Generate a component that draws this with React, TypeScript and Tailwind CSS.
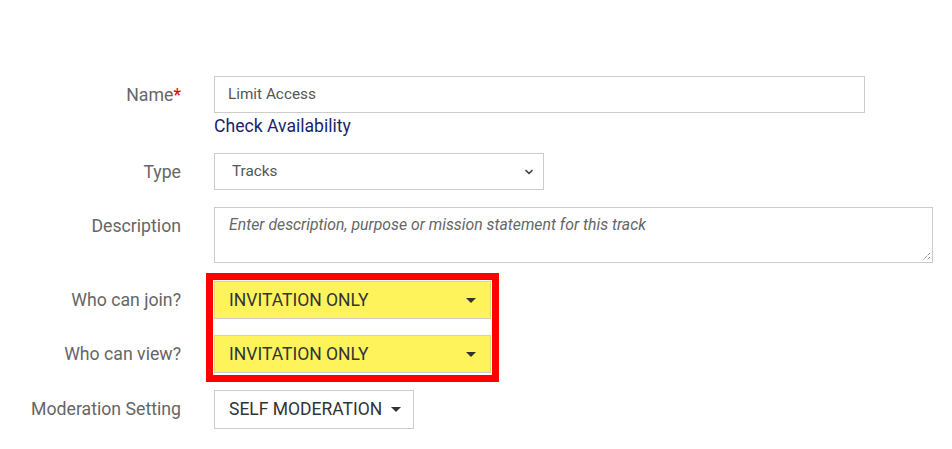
import { ChevronDown } from "lucide-react";

type RowProps = {
  label: React.ReactNode;
  children: React.ReactNode;
  className?: string;
};

const Row = ({ label, children, className = "" }: RowProps) => {
  return (
    <div className={`flex items-start ${className}`}>
      <label className="w-[181px] shrink-0 text-right text-[17.7px] leading-[38px] text-[#666]">
        {label}
      </label>
      <div className="ml-[33px]">{children}</div>
    </div>
  );
};

const Caret = () => (
  <span className="inline-block w-0 h-0 border-l-[5px] border-r-[5px] border-t-[5px] border-l-transparent border-r-transparent border-t-[#333]" />
);

const YellowSelect = ({ value }: { value: string }) => (
  <div className="flex items-center justify-between w-[277px] h-[38px] bg-[#fff35c] border border-[#e3da66] border-b-[#ccc] pl-[14px] pr-[14px] text-[17.5px] text-[#333]">
    <span>{value}</span>
    <Caret />
  </div>
);

export default function App() {
  return (
    <div className="w-[952px] h-[449px] bg-white pt-[76px] font-['Roboto',sans-serif] overflow-hidden">
      <Row label={<>Name<span className="text-[#e00]">*</span></>}>
        <div className="w-[651px] h-[37px] border border-[#ccc] flex items-center px-[13px] text-[15.3px] text-[#555]">
          Limit Access
        </div>
        <a className="block mt-[3px] text-[17.6px] leading-[20px] text-[#1a1f6e]">
          Check Availability
        </a>
      </Row>

      <Row label="Type" className="mt-[17px]">
        <div className="w-[330px] h-[37px] border border-[#ccc] flex items-center justify-between pl-[17px] pr-[8px] text-[15.3px] text-[#555]">
          <span>Tracks</span>
          <ChevronDown size={12} strokeWidth={3.5} className="text-[#444]" />
        </div>
      </Row>

      <Row label="Description" className="mt-[16px]">
        <div className="relative w-[719px] h-[56px] border border-[#ccc] px-[14px] pt-[5px] text-[15.8px] italic text-[#666]">
          Enter description, purpose or mission statement for this track
          <svg className="absolute right-[1px] bottom-[1px]" width="9" height="9" viewBox="0 0 9 9">
            <path d="M8 1 L1 8 M8 5 L5 8" stroke="#555" strokeWidth="1" strokeDasharray="1 1" />
          </svg>
        </div>
      </Row>

      <div className="relative mt-[10px]">
        <Row label="Who can join?" className="pt-[8px]">
          <YellowSelect value="INVITATION ONLY" />
        </Row>
        <Row label="Who can view?" className="mt-[16px]">
          <YellowSelect value="INVITATION ONLY" />
        </Row>
        <div className="absolute left-[206px] top-0 w-[293px] h-[109px] border-[7px] border-[#ff0000] pointer-events-none" />
      </div>

      <Row label="Moderation Setting" className="mt-[17px]">
        <div className="flex items-center gap-[9px] h-[39px] w-[200px] border border-[#ccc] pl-[14px] text-[17.5px] text-[#333]">
          <span>SELF MODERATION</span>
          <Caret />
        </div>
      </Row>
    </div>
  );
}
